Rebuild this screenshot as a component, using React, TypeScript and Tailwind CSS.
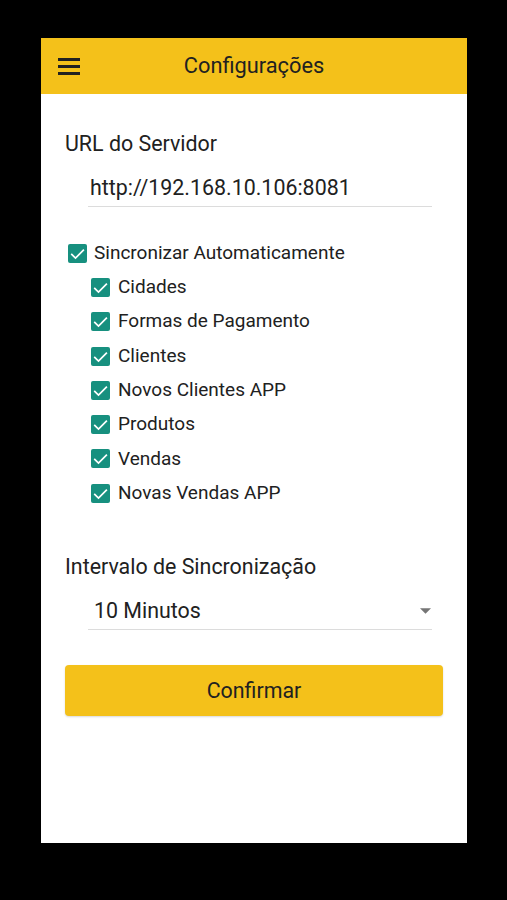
import { useState } from "react"

const subItems = [
  "Cidades",
  "Formas de Pagamento",
  "Clientes",
  "Novos Clientes APP",
  "Produtos",
  "Vendas",
  "Novas Vendas APP",
]

function CheckBox({ checked, onClick }: { checked: boolean; onClick: () => void }) {
  return (
    <button
      onClick={onClick}
      className={`flex h-[19px] w-[19px] shrink-0 items-center justify-center rounded-[2px] ${
        checked ? "bg-[#17907f]" : "border-2 border-[#757575] bg-white"
      }`}
    >
      {checked && (
        <svg viewBox="0 0 19 19" className="h-[19px] w-[19px]" fill="none">
          <path d="M3.2 9.8l4.3 4.3 8.4-8.4" stroke="white" strokeWidth="1.7" />
        </svg>
      )}
    </button>
  )
}

export default function App() {
  const [auto, setAuto] = useState(true)
  const [checks, setChecks] = useState<boolean[]>(subItems.map(() => true))

  const toggle = (i: number) => setChecks((prev) => prev.map((c, j) => (j === i ? !c : c)))

  return (
    <div
      className="min-h-[900px] w-full bg-black pt-[38px] pl-[41px] text-[#212121]"
      style={{ fontFamily: "Roboto, 'Noto Sans', sans-serif" }}
    >
      <div className="flex h-[805px] w-[426px] flex-col bg-white">
        {/* toolbar */}
        <div className="relative flex h-[56px] items-center justify-center bg-[#f4c11a]">
          <button className="absolute left-[17px] top-[20px] flex w-[22px] flex-col gap-[4.5px]">
            <span className="h-[2.5px] w-full bg-[#212121]" />
            <span className="h-[2.5px] w-full bg-[#212121]" />
            <span className="h-[2.5px] w-full bg-[#212121]" />
          </button>
          <span className="text-[21.8px] leading-[24px]">Configurações</span>
        </div>

        <div className="flex flex-col px-[24px]">
          <div className="mt-[38px] text-[21.4px] leading-[24px]">URL do Servidor</div>
          <div className="mt-[20px] ml-[23px] mr-[11px] border-b border-[#dcdcdc] pb-[6px] pl-[2px] text-[21.4px] leading-[24px]">
            http://192.168.10.106:8081
          </div>

          <div className="mt-[29px] flex flex-col">
            <div className="flex h-[34.3px] items-center gap-[7px] pl-[3px]">
              <CheckBox checked={auto} onClick={() => setAuto(!auto)} />
              <span className="text-[19px]">Sincronizar Automaticamente</span>
            </div>
            {subItems.map((item, i) => (
              <div key={item} className="flex h-[34.3px] items-center gap-[8px] pl-[26px]">
                <CheckBox checked={checks[i]} onClick={() => toggle(i)} />
                <span className="text-[19px]">{item}</span>
              </div>
            ))}
          </div>

          <div className="mt-[45px] text-[21.4px] leading-[24px]">Intervalo de Sincronização</div>
          <div className="mt-[20px] ml-[23px] mr-[11px] flex items-center justify-between border-b border-[#dcdcdc] pb-[6px] pl-[6px]">
            <span className="text-[21.4px] leading-[24px]">10 Minutos</span>
            <svg viewBox="0 0 12 6" className="mr-[1px] h-[6px] w-[11px]">
              <path d="M0 0h12L6 6z" fill="#757575" />
            </svg>
          </div>

          <button className="mt-[35px] h-[51px] w-full rounded-[4px] bg-[#f4c11a] text-[21.4px] shadow-[0_1px_2px_rgba(0,0,0,0.15)]">
            Confirmar
          </button>
        </div>
      </div>
    </div>
  )
}
